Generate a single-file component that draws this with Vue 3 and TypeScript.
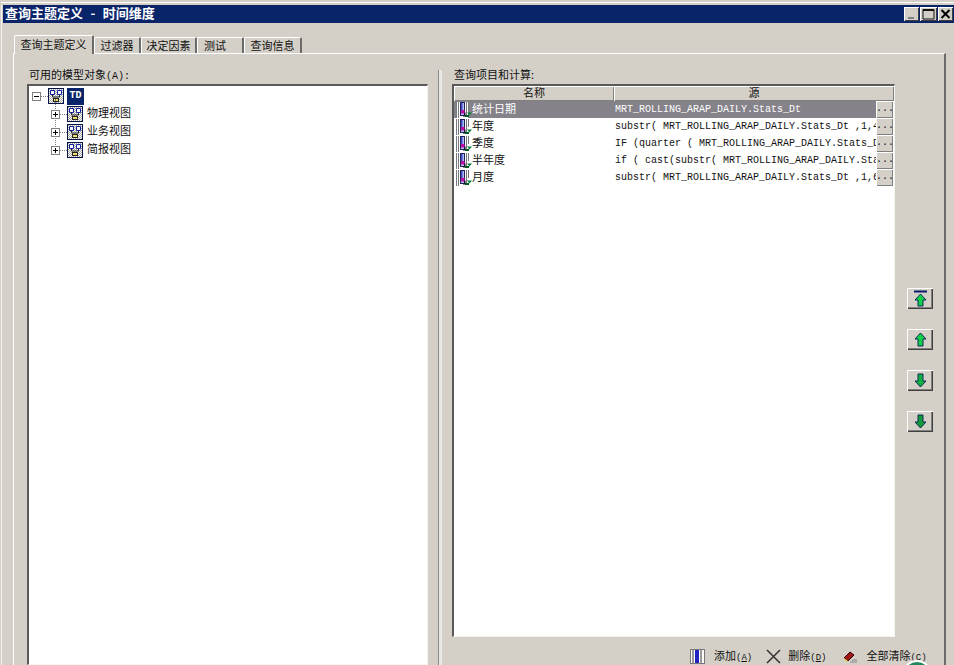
<script setup lang="ts">
const tabs = [
  { label: '查询主题定义', w: 80, active: true, cls: '' },
  { label: '过滤器', w: 47, active: false, cls: '' },
  { label: '决定因素', w: 56, active: false, cls: '' },
  { label: '测试', w: 47, active: false, cls: 'left-text' },
  { label: '查询信息', w: 58, active: false, cls: '' },
]
const treeChildren = ['物理视图', '业务视图', '简报视图']
const rows = [
  { name: '统计日期', src: 'MRT_ROLLING_ARAP_DAILY.Stats_Dt', selected: true },
  { name: '年度', src: 'substr( MRT_ROLLING_ARAP_DAILY.Stats_Dt ,1,4)', selected: false },
  { name: '季度', src: 'IF (quarter ( MRT_ROLLING_ARAP_DAILY.Stats_Dt', selected: false },
  { name: '半年度', src: 'if ( cast(substr( MRT_ROLLING_ARAP_DAILY.Stats_Dt', selected: false },
  { name: '月度', src: 'substr( MRT_ROLLING_ARAP_DAILY.Stats_Dt ,1,6)', selected: false },
]
</script>

<template>
  <div class="window">
    <svg class="defs" width="0" height="0" aria-hidden="true">
      <defs>
        <pattern id="dither" width="2" height="2" patternUnits="userSpaceOnUse">
          <rect width="2" height="2" fill="#fff" />
          <rect width="1" height="1" fill="#a8a8a0" />
          <rect x="1" y="1" width="1" height="1" fill="#a8a8a0" />
        </pattern>
        <symbol id="cube" viewBox="0 0 16 16">
          <rect width="16" height="16" fill="#06144a" />
          <rect x="1" y="1" width="14" height="14" fill="url(#dither)" />
          <path d="M2.500 2.500h4v4h-4zM9.500 2.500h4v4h-4z" fill="#fff" stroke="#1020a0" />
          <path d="M4.500 7v2h7V7" fill="none" stroke="#222" />
          <rect x="5.500" y="10.500" width="5" height="3" fill="#efe070" stroke="#222" />
        </symbol>
        <symbol id="field" viewBox="0 0 16 16">
          <rect x="0" y="0" width="12" height="16" fill="#fff" />
          <path d="M.5 0v16M2.500 0v16M10.500 0v14M12.500 0v8" stroke="#77777f" />
          <rect x="4.500" y="0.500" width="4" height="13" fill="#aebcf0" stroke="#20205a" />
          <rect x="5" y="1" width="1.500" height="7" fill="#3a48c8" />
          <rect x="5" y="8" width="3.500" height="3.500" fill="#c010a8" />
          <path d="M9 10.500v3.500h-2" fill="none" stroke="#0a0a20" stroke-width="1" />
          <path d="M9 14h4" stroke="#045a20" stroke-width="2" />
          <path d="M11 10.500h5l-2.500 3z" fill="#06803a" />
        </symbol>
      </defs>
    </svg>
    <div class="top-strip"></div>
    <div class="titlebar">
      <span class="title">查询主题定义 - 时间维度</span>
      <div class="win-btns">
        <button class="win-btn"><svg width="15" height="14" viewBox="0 0 15 14"><rect x="4" y="10" width="6" height="2" fill="#808080" /></svg></button>
        <button class="win-btn max"><svg width="17" height="14" viewBox="0 0 17 14"><path d="M3 2.500h11v9.500H3z" fill="none" stroke="#111" stroke-width="1" /><path d="M3 3h11" stroke="#111" stroke-width="2" /></svg></button>
        <button class="win-btn"><svg width="15" height="14" viewBox="0 0 15 14"><path d="M3.500 3l8 8M11.500 3l-8 8" stroke="#000" stroke-width="2" /></svg></button>
      </div>
    </div>

    <div class="tabs">
      <div v-for="t in tabs" :key="t.label" class="tab" :class="[t.cls, { active: t.active }]" :style="{ width: t.w + 'px' }">{{ t.label }}</div>
    </div>

    <div class="panel">
      <section class="left">
        <div class="label">可用的模型对象<span class="latin">(A):</span></div>
        <div class="tree sunken">
          <div class="tree-row">
            <span class="exp"><svg width="9" height="9" viewBox="0 0 9 9"><path d="M2 4.500h5" stroke="#000" /></svg></span>
            <span class="dots-h"></span>
            <svg class="cube" width="16" height="16"><use href="#cube" /></svg>
            <span class="td">TD</span>
          </div>
          <div class="children">
            <div v-for="c in treeChildren" :key="c" class="tree-row">
              <span class="exp"><svg width="9" height="9" viewBox="0 0 9 9"><path d="M2 4.500h5M4.500 2v5" stroke="#000" /></svg></span>
              <span class="dots-h"></span>
              <svg class="cube" width="16" height="16"><use href="#cube" /></svg>
              <span class="tree-text">{{ c }}</span>
            </div>
          </div>
        </div>
      </section>

      <div class="splitter"></div>

      <section class="right">
        <div class="label">查询项目和计算:</div>
        <div class="right-main">
          <div class="grid sunken">
            <div class="grid-head">
              <div class="head-cell name">名称</div>
              <div class="head-cell src">源</div>
            </div>
            <div v-for="r in rows" :key="r.name" class="grid-row" :class="{ selected: r.selected }">
              <svg class="row-icon" width="16" height="16"><use href="#field" /></svg>
              <span class="row-name">{{ r.name }}</span>
              <span class="row-src">{{ r.src }}</span>
              <span class="dots-btn">...</span>
            </div>
          </div>
          <div class="side-btns">
            <button class="move"><svg width="15" height="17" viewBox="0 0 15 17"><path d="M1 1.500h13" stroke="#0a1a6a" stroke-width="2" /><path d="M7.500 4L13 10H10v6H5V10H2z" fill="#10d048" stroke="#0a2a5a" /></svg></button>
            <button class="move"><svg width="15" height="17" viewBox="0 0 15 17"><path d="M7.500 2L13 8H10v7H5V8H2z" fill="#10d048" stroke="#0a2a5a" /></svg></button>
            <button class="move"><svg width="15" height="17" viewBox="0 0 15 17"><path d="M7.500 15L13 9H10V2H5v7H2z" fill="#10b040" stroke="#0a2a5a" /></svg></button>
            <button class="move"><svg width="15" height="17" viewBox="0 0 15 17"><path d="M7.500 15L13 9H10V2H5v7H2z" fill="#109a38" stroke="#0a2a5a" /></svg></button>
          </div>
        </div>
        <div class="actions">
          <div class="action add">
            <svg width="15" height="15" viewBox="0 0 15 15"><rect x="0.500" y="0.500" width="14" height="14" fill="#fff" stroke="#777" /><rect x="5" y="1" width="4" height="13" fill="#2222c0" /><path d="M3 1v13M11 1v13" stroke="#333" /></svg>
            <span class="action-text">添加<span class="latin">(<u>A</u>)</span></span>
          </div>
          <div class="action del">
            <svg width="15" height="15" viewBox="0 0 15 15"><path d="M1 1l13 13M14 1L1 14" stroke="#333" stroke-width="1.500" /></svg>
            <span class="action-text">删除<span class="latin">(<u>D</u>)</span></span>
          </div>
          <div class="action clear">
            <svg width="15" height="15" viewBox="0 0 15 15"><path d="M1 9l6-6 4 3-6 6z" fill="#a01818" stroke="#300" /><path d="M1 9l4 3-1 1-3-3z" fill="#e8d040" /><path d="M7 13h7M9 11h5" stroke="#888" /></svg>
            <span class="action-text">全部清除<span class="latin">(<u>C</u>)</span></span>
          </div>
        </div>
      </section>
    </div>
    <div class="corner-ring"></div>
  </div>
</template>

<style>
html, body { margin: 0; background: #d4d0c8; }
</style>

<style scoped>
.window {
  position: relative;
  width: 954px;
  height: 665px;
  overflow: hidden;
  background: #d4d0c8;
  font-family: "Noto Sans CJK SC", sans-serif;
  font-size: 11px;
  color: #111;
  box-sizing: border-box;
  border-left: 1px solid #d4d0c8;
  box-shadow: inset 1px 0 #f4f4f0;
  display: flex;
  flex-direction: column;
}
.defs { position: absolute; }
.top-strip {
  height: 5px;
  flex: none;
  box-sizing: border-box;
  margin-left: -1px;
  border-top: 2px solid #d4d0c8;
  border-bottom: 2px solid #d4d0c8;
  background: #fff;
}
.titlebar {
  height: 18px;
  flex: none;
  margin-left: 2px;
  background: #0a246a;
  display: flex;
  align-items: center;
  justify-content: space-between;
  padding: 0 1px 0 2px;
}
.title {
  color: #fff;
  font-size: 13px;
  font-weight: 700;
  line-height: 16px;
  padding-bottom: 2px;
  white-space: pre;
  word-spacing: 4.5px;
}
.win-btns { display: flex; gap: 1px; }
.win-btn {
  width: 15px;
  height: 14px;
  padding: 0;
  box-sizing: border-box;
  background: #d4d0c8;
  border: none;
  box-shadow: inset 1px 1px #fff, inset -1px -1px #404040;
  display: block;
}
.win-btn.max { width: 17px; }
.win-btn svg { display: block; }
.tabs {
  flex: none;
  display: flex;
  align-items: flex-end;
  height: 18px;
  margin: 12px 0 0 13px;
  position: relative;
  z-index: 1;
}
.tab {
  height: 16px;
  line-height: 14px;
  text-align: center;
  box-sizing: border-box;
  border-top: 1px solid #fff;
  border-left: 1px solid #fff;
  border-right: 2px solid #6a6a6a;
  border-radius: 2px 2px 0 0;
  white-space: nowrap;
}
.tab.left-text { text-align: left; padding-left: 6px; }
.tab.active {
  height: 19px;
  line-height: 17px;
  margin-bottom: -1px;
  background: #d4d0c8;
}
.panel {
  flex: 1;
  min-height: 0;
  margin-left: 12px;
  width: 933px;
  box-sizing: border-box;
  border-top: 1px solid #fff;
  border-left: 1px solid #fff;
  border-right: 2px solid #6a6a6a;
  display: flex;
}
.left {
  width: 401px;
  margin-left: 13px;
  flex: none;
  display: flex;
  flex-direction: column;
}
.label {
  height: 30px;
  flex: none;
  box-sizing: border-box;
  padding: 13px 0 0 2px;
  line-height: 15px;
  white-space: nowrap;
}
.latin { font-family: "Liberation Mono", monospace; font-size: 10px; }
.sunken {
  box-sizing: border-box;
  background: #fff;
  border-top: 2px solid #5a5a5a;
  border-left: 2px solid #5a5a5a;
  border-right: 1px solid #f4f4f0;
  border-bottom: 1px solid #f4f4f0;
}
.tree {
  flex: 1;
  padding: 1px 0 0 3px;
}
.tree-row {
  display: flex;
  align-items: center;
  height: 18px;
  position: relative;
}
.children { margin-left: 19px; position: relative; }
.children::before {
  content: "";
  position: absolute;
  left: 4px;
  top: -6px;
  height: 46px;
  border-left: 1px dotted #808080;
}
.exp {
  position: relative;
  z-index: 1;
  width: 9px;
  height: 9px;
  box-sizing: border-box;
  border: 1px solid #808080;
  background: #fff;
  display: block;
  flex: none;
}
.exp svg { display: block; margin: -1px; }
.dots-h { width: 7px; border-top: 1px dotted #808080; flex: none; }
.cube { flex: none; display: block; }
.td {
  margin-left: 3px;
  width: 17px;
  height: 17px;
  line-height: 16px;
  background: #0a246a;
  color: #fff;
  text-align: center;
  font-family: "Liberation Mono", monospace;
  font-size: 10px;
  font-weight: 700;
}
.tree-text { margin-left: 4px; white-space: nowrap; padding-bottom: 5px; }
.splitter {
  flex: none;
  width: 3px;
  margin: 16px 0 0 10px;
  background: #e8e8e4;
  border-left: 1px solid #8a8a8a;
}
.right {
  flex: none;
  width: 481px;
  margin-left: 10px;
  display: flex;
  flex-direction: column;
}
.right-main { display: flex; align-items: flex-start; }
.grid {
  width: 443px;
  height: 553px;
  flex: none;
  overflow: hidden;
}
.grid-head {
  height: 15px;
  display: flex;
  background: #d4d0c8;
}
.head-cell {
  line-height: 12px;
  text-align: center;
  box-sizing: border-box;
  box-shadow: inset 1px 1px #fff, inset -1px -1px #808080;
}
.head-cell.name { width: 160px; }
.head-cell.src { flex: 1; }
.grid-row {
  height: 17px;
  display: flex;
  align-items: center;
  padding-left: 2px;
}
.grid-row.selected .row-name,
.grid-row.selected .row-src { color: #fff; }
.grid-row.selected { background: linear-gradient(#858289, #858289) 0 0 / 423px 100% no-repeat; }
.row-icon { flex: none; display: block; }
.row-name { width: 143px; flex: none; white-space: nowrap; padding-bottom: 4px; }
.row-src {
  width: 261px;
  flex: none;
  overflow: hidden;
  white-space: pre;
  font-family: "Liberation Mono", monospace;
  font-size: 10px;
}
.dots-btn {
  width: 17px;
  height: 17px;
  flex: none;
  box-sizing: border-box;
  background: #d4d0c8;
  box-shadow: inset 1px 1px #fff, inset -1px -1px #808080;
  font-family: "Liberation Mono", monospace;
  font-size: 10px;
  line-height: 16px;
  text-align: center;
}
.side-btns {
  flex: none;
  margin: 204px 0 0 12px;
  display: flex;
  flex-direction: column;
  gap: 20px;
}
.move {
  width: 26px;
  height: 21px;
  padding: 0;
  background: #d4d0c8;
  border: none;
  box-sizing: border-box;
  box-shadow: inset 1px 1px #fff, inset -1px -1px #404040, inset -2px -2px #808080;
  display: flex;
  align-items: center;
  justify-content: center;
}
.actions {
  display: flex;
  margin-top: 11px;
  padding-left: 238px;
  height: 17px;
  align-items: center;
  white-space: nowrap;
}
.action { display: flex; align-items: center; }
.action svg { display: block; flex: none; }
.action-text { padding-bottom: 3px; }
.action .latin { font-size: 9px; }
.add svg { margin-right: 9px; }
.del { margin-left: 14px; }
.del svg { margin-right: 7px; }
.clear { margin-left: 17px; }
.clear svg { margin-right: 8px; }
.corner-ring {
  position: absolute;
  left: 901px;
  top: 660px;
  width: 30px;
  height: 30px;
  box-sizing: border-box;
  border-radius: 50%;
  background: #1f8a5a;
  border: 2px solid #fff;
}
</style>
